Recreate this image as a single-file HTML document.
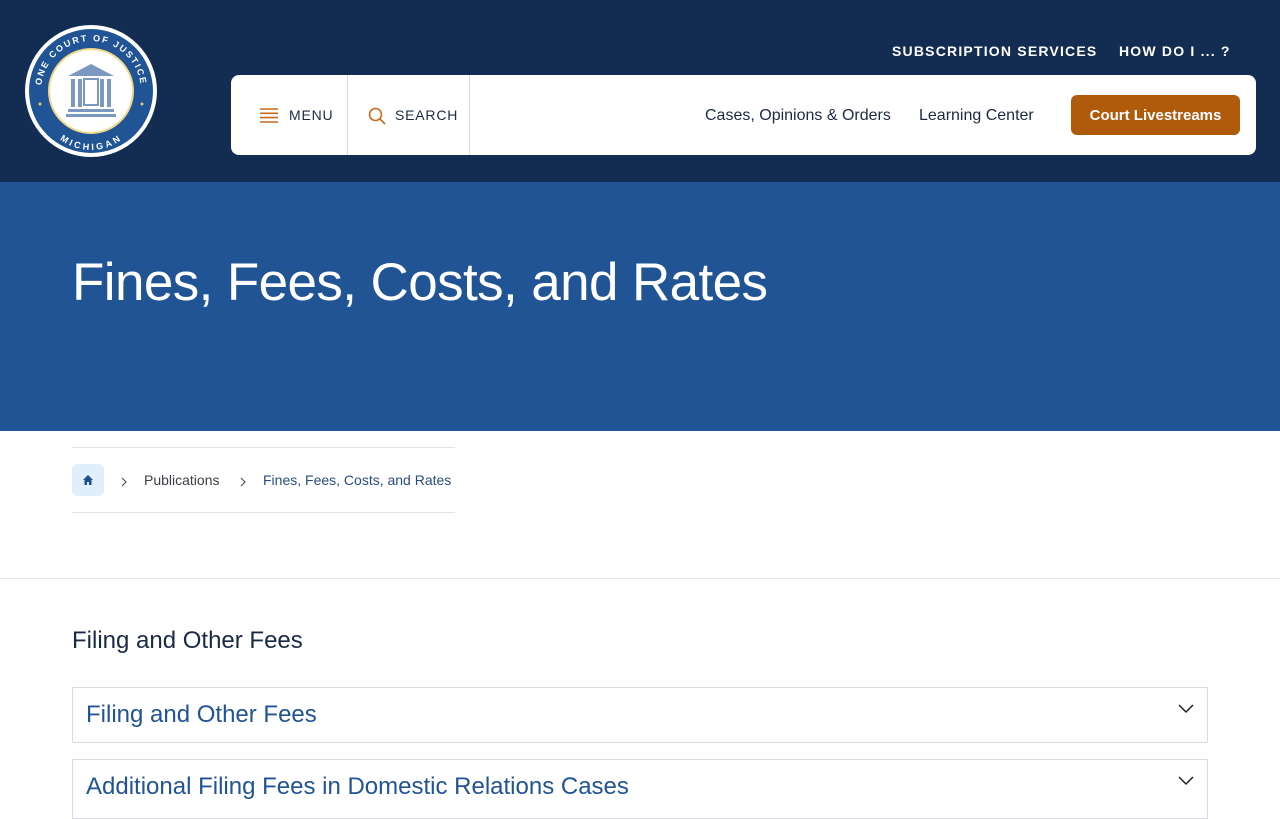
<!DOCTYPE html>
<html><head><meta charset="utf-8"><style>
*{margin:0;padding:0;box-sizing:border-box}
body{width:1280px;height:800px;overflow:hidden;background:#fff;font-family:"Liberation Sans",sans-serif;position:relative}
.hdr{position:absolute;left:0;top:0;width:1280px;height:182px;background:#132d52}
.top{position:absolute;top:43px;color:#fff;font-weight:bold;font-size:14px;letter-spacing:1.2px}
.bar{position:absolute;left:231px;top:75px;width:1025px;height:80px;background:#fff;border-radius:8px}
.sep{position:absolute;top:0;width:1px;height:80px;background:#d6d9de}
.bt{position:absolute;top:32px;font-size:14px;letter-spacing:.8px;color:#1b2a44}
.lk{position:absolute;top:107px;font-size:16px;color:#1b2a44}
.btn{position:absolute;left:1071px;top:95px;width:169px;height:40px;background:#b05a0c;border-radius:6px;color:#fff;font-weight:bold;font-size:15px;text-align:center;line-height:41px}
.hero{position:absolute;left:0;top:182px;width:1280px;height:249px;background:#215494}
.hero h1{position:absolute;left:72px;top:70px;font-weight:normal;color:#fff;font-size:53px;letter-spacing:-.6px}
.bc{position:absolute;left:72px;top:447px;width:383px;height:66px;border-top:1px solid #e2e4e8;border-bottom:1px solid #e2e4e8}
.home{position:absolute;left:0;top:16px;width:32px;height:32px;background:#e1eefb;border-radius:6px}
.bc span{position:absolute;top:24px;font-size:14px}
.hr{position:absolute;left:0;top:578px;width:1280px;height:1px;background:#e2e4e8}
h2{position:absolute;left:72px;top:627px;font-weight:normal;font-size:24px;color:#1b2a44}
.acc{position:absolute;left:72px;width:1136px;height:56px;border:1px solid #d9dbde;font-size:24px;color:#215494;padding:13px 0 0 13px}
.acc svg{position:absolute;right:13px;top:16px}
</style></head><body>
<div class="hdr">
<svg style="position:absolute;left:24px;top:24px" width="134" height="134" viewBox="0 0 134 134">
<circle cx="67" cy="67" r="66" fill="#fff"/><circle cx="67" cy="67" r="62" fill="#215494"/>
<circle cx="67" cy="67" r="43" fill="#f2d98a"/><circle cx="67" cy="67" r="41" fill="#fff"/>
<defs><path id="ta" d="M17,67 A50,50 0 0 1 117,67"/><path id="tb" d="M22,75 A45,45 0 0 0 112,75"/></defs>
<text font-size="9" fill="#fff" font-weight="bold" letter-spacing="1.8" font-family="Liberation Sans"><textPath href="#ta" startOffset="50%" text-anchor="middle">ONE COURT OF JUSTICE</textPath></text>
<text font-size="9" fill="#fff" font-weight="bold" letter-spacing="1.8" font-family="Liberation Sans" dominant-baseline="hanging"><textPath href="#tb" startOffset="50%" text-anchor="middle">MICHIGAN</textPath></text>
<circle cx="16" cy="80" r="1.5" fill="#e8c66a"/><circle cx="118" cy="80" r="1.5" fill="#e8c66a"/>
<polygon points="67,40 44,52 90,52" fill="#7b98c0"/>
<rect x="47" y="55" width="4" height="28" fill="#7b98c0"/><rect x="54" y="55" width="4" height="28" fill="#7b98c0"/>
<rect x="76" y="55" width="4" height="28" fill="#7b98c0"/><rect x="83" y="55" width="4" height="28" fill="#7b98c0"/>
<rect x="60" y="55" width="14" height="26" fill="none" stroke="#7b98c0" stroke-width="2"/>
<rect x="44" y="85" width="46" height="3" fill="#7b98c0"/><rect x="42" y="90" width="50" height="3" fill="#7b98c0"/>
</svg>
<div class="top" style="left:892px">SUBSCRIPTION SERVICES</div>
<div class="top" style="left:1119px">HOW DO I ... ?</div>
</div>
<div class="bar">
<svg style="position:absolute;left:29px;top:33px" width="18" height="15"><g stroke="#c9691a" stroke-width="1.6"><line x1="0" y1="1" x2="18" y2="1"/><line x1="0" y1="5.3" x2="18" y2="5.3"/><line x1="0" y1="9.6" x2="18" y2="9.6"/><line x1="0" y1="14" x2="18" y2="14"/></g></svg>
<div class="bt" style="left:58px">MENU</div>
<div class="sep" style="left:116px"></div>
<svg style="position:absolute;left:137px;top:32px" width="18" height="18"><circle cx="7.5" cy="7.5" r="6" fill="none" stroke="#c9691a" stroke-width="1.6"/><line x1="12" y1="12" x2="17" y2="17" stroke="#c9691a" stroke-width="1.6"/></svg>
<div class="bt" style="left:164px">SEARCH</div>
<div class="sep" style="left:238px"></div>
</div>
<div class="lk" style="left:705px">Cases, Opinions &amp; Orders</div>
<div class="lk" style="left:919px">Learning Center</div>
<div class="btn">Court Livestreams</div>
<div class="hero"><h1>Fines, Fees, Costs, and Rates</h1></div>
<div class="bc">
<div class="home"><svg style="position:absolute;left:10px;top:10px" width="12" height="12" viewBox="0 0 12 12"><path d="M6,1 L11,6 L9.5,6 L9.5,11 L7,11 L7,8 L5,8 L5,11 L2.5,11 L2.5,6 L1,6Z" fill="#1f4f8c"/></svg></div>
<svg style="position:absolute;left:48px;top:28px" width="8" height="12"><path d="M2,2 L6,6 L2,10" fill="none" stroke="#555" stroke-width="1.2"/></svg>
<span style="left:72px;color:#3a3f47">Publications</span>
<svg style="position:absolute;left:167px;top:28px" width="8" height="12"><path d="M2,2 L6,6 L2,10" fill="none" stroke="#555" stroke-width="1.2"/></svg>
<span style="left:191px;color:#2a4e7c">Fines, Fees, Costs, and Rates</span>
</div>
<div class="hr"></div>
<h2>Filing and Other Fees</h2>
<div class="acc" style="top:687px">Filing and Other Fees<svg width="16" height="10"><path d="M1,1 L8,8 L15,1" fill="none" stroke="#222" stroke-width="1.5"/></svg></div>
<div class="acc" style="top:759px;height:60px">Additional Filing Fees in Domestic Relations Cases<svg width="16" height="10"><path d="M1,1 L8,8 L15,1" fill="none" stroke="#222" stroke-width="1.5"/></svg></div>
</body></html>
